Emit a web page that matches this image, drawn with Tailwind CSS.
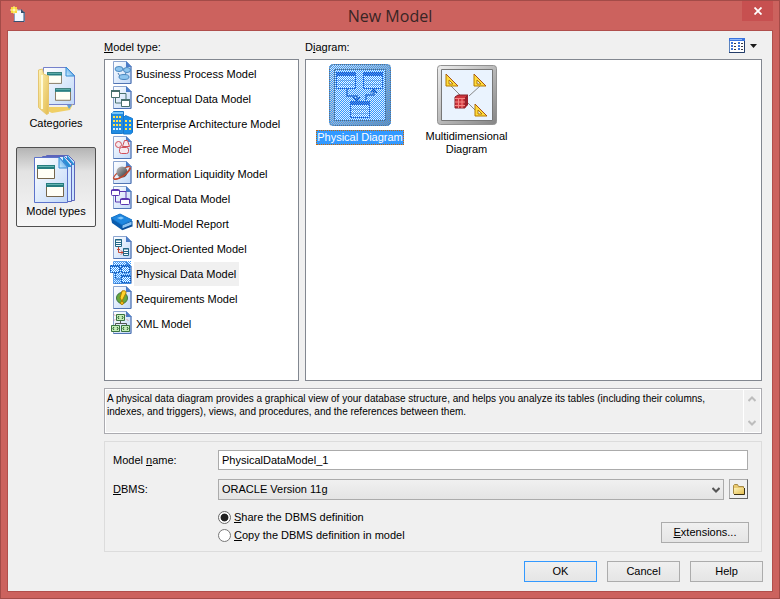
<!DOCTYPE html>
<html lang="en">
<head>
    <meta charset="UTF-8">
    <meta name="viewport" content="width=device-width, initial-scale=1.0">
    <title>New Model</title>
    <script src="https://cdn.jsdelivr.net/npm/@tailwindcss/browser@4"></script>
</head>
<body class="font-['Liberation_Sans',sans-serif] text-[11px] leading-[13px] text-black">

<!-- shared shapes -->
<svg class="absolute w-0 h-0" aria-hidden="true">
    <defs>
        <linearGradient id="paper" x1="0" y1="0" x2="1" y2="1">
            <stop offset="0" stop-color="#fff"/>
            <stop offset="1" stop-color="#c0d8f8"/>
        </linearGradient>
        <linearGradient id="folder" x1="0" y1="0" x2="1" y2="1">
            <stop offset="0" stop-color="#fdf3b8"/>
            <stop offset="1" stop-color="#e5bd50"/>
        </linearGradient>
        <linearGradient id="fold" x1="0" y1="1" x2="1" y2="0">
            <stop offset="0" stop-color="#d5f2ff"/>
            <stop offset="1" stop-color="#2687df"/>
        </linearGradient>
        <linearGradient id="steel" x1="0" y1="0" x2="1" y2="1">
            <stop offset="0" stop-color="#eee"/>
            <stop offset="1" stop-color="#858585"/>
        </linearGradient>
        <linearGradient id="rock" x1="0" y1="0" x2="1" y2="1">
            <stop offset="0" stop-color="#c4c4c4"/>
            <stop offset="1" stop-color="#303338"/>
        </linearGradient>
        <pattern id="dots" width="2" height="2" patternUnits="userSpaceOnUse">
            <path d="M0 0h1v1H0zM1 1h1v1H1z" fill="#3399ff" shape-rendering="crispEdges"/>
        </pattern>
        <symbol id="page" viewBox="0 0 24 24">
            <path d="M3.500 .5h13l4.500 4.500v17.500h-17.500z" fill="url(#paper)" stroke="#8ca5d0"/>
            <path d="M3.500 22.500h17.500V5" fill="none" stroke="#5074b4"/>
            <path d="M16 0l5.500 6h-5.500z" fill="#4a7cc8"/>
        </symbol>
        <symbol id="win" viewBox="0 0 18 14">
            <path d="M.5.5h17v13H.5z" fill="#fffff6" stroke="#75664c"/>
            <path d="M0 0h18v4H0z" fill="#267d80"/>
            <path d="M1 1h16v1H1z" fill="#65b5b1"/>
        </symbol>
        <symbol id="ruler" viewBox="0 0 14 14">
            <path d="M1 1l12 12H1z" fill="#ffdb3c" stroke="#b47a00"/>
            <path d="M4 7l4 4H4z" fill="#e8eef8" stroke="#b47a00"/>
            <path d="M1 1l12 12" stroke="#a8521a"/>
        </symbol>
    </defs>
</svg>

<div class="flex flex-col h-screen bg-[#cc625e] border border-[#a34b48]">
    <header class="relative h-[29px] shrink-0 flex items-center justify-center">
        <svg class="absolute left-[9px] top-[5px] w-4 h-4" viewBox="0 0 16 16">
            <path d="M4.500 4h7l3 3v8.500h-10z" fill="#f4f8ff" stroke="#8b9fc0"/>
            <path d="M3.500 15.500h10.500V6" fill="none" stroke="#365073"/>
            <path d="M11 3l4 4h-4z" fill="#35506c"/>
            <path d="M1 1h6v6H1z" fill="#f9d93a"/>
            <path d="M3 3h2v2H3zM4 0v2M4 6v2M0 4h2M6 4h2" fill="#fff" stroke="#fff4a0"/>
        </svg>
        <h1 class="font-['Open_Sans',sans-serif] text-base leading-4 text-[#382525]">New Model</h1>
        <button class="absolute right-[6px] top-0 w-[31px] h-5 bg-[#c75050] flex items-center justify-center" aria-label="Close">
            <svg class="w-2 h-2" viewBox="0 0 8 8"><path d="M.5.5l7 7M7.500.5l-7 7" stroke="#fff" stroke-width="1.800"/></svg>
        </button>
    </header>

    <main class="flex-1 min-h-0 mx-[6px] mb-[6px] border border-[#b04f4c] bg-[#f0f0f0] flex">
        <nav class="w-24 shrink-0 pl-2 pt-7">
            <button class="w-20 h-20 flex flex-col items-center pt-2">
                <svg class="w-12 h-12" viewBox="0 0 48 48">
                    <path d="M11.500.5h23l8 8v29h-31z" fill="url(#paper)" stroke="#7581cb"/>
                    <path d="M34 0l8.500 9H34z" fill="url(#fold)" stroke="#328bd5"/>
                    <path d="M7 40h28l6-3-3 6-18 3z" fill="#f0cf65"/>
                    <path d="M35 38h5l-3 4z" fill="#609fd4"/>
                    <use href="#win" x="15" y="5" width="15" height="12"/>
                    <use href="#win" x="23" y="21" width="16" height="13"/>
                    <path d="M6.500 3l4-1 1 5 5 2v37.500l-2 1-8-7z" fill="url(#folder)" stroke="#e5c671"/>
                    <path d="M10 8v34" stroke="#fffbd9" stroke-width="2"/>
                </svg>
                <span class="mt-[2px]">Categories</span>
            </button>
            <button class="w-20 h-20 mt-2 flex flex-col items-center pt-[7px] border border-[#505050] rounded-xs bg-linear-to-b from-[#b5b5b5] via-[#e3e3e3] via-30% to-[#f7f7f7]">
                <svg class="w-12 h-12" viewBox="0 0 48 48">
                    <path d="M14.500.5h22l6 6v39h-28z" fill="#cce4ff" stroke="#5c65bb"/>
                    <path d="M35 0l8 10h-8z" fill="#2791d7"/>
                    <path d="M10.500 1.500h22l7 7v38h-29z" fill="#d6eaff" stroke="#5c65bb"/>
                    <path d="M31 1l9 11h-9z" fill="#2791d7"/>
                    <path d="M2.500 2.500h25l8 9v36h-33z" fill="url(#paper)" stroke="#5c73cb"/>
                    <path d="M27 2l9 11h-9z" fill="url(#fold)" stroke="#328bd5"/>
                    <use href="#win" x="5" y="10" width="18" height="14"/>
                    <use href="#win" x="14" y="28" width="18" height="14"/>
                </svg>
                <span class="mt-[2px]">Model types</span>
            </button>
        </nav>

        <div class="flex-1 min-w-0 flex flex-col pr-[10px] pb-[9px]">
            <div class="h-7 shrink-0 flex items-center">
                <h2 class="w-[201px] pt-1"><u>M</u>odel type:</h2>
                <h2 class="flex-1 pt-1">D<u>i</u>agram:</h2>
                <button class="flex items-center gap-[5px] pr-[5px] pt-px" aria-label="View">
                    <svg class="w-4 h-[15px]" viewBox="0 0 16 15">
                        <path d="M.5.5h15v14H.5z" fill="#fff" stroke="#5c83bd"/>
                        <path d="M0 0h16v3H0z" fill="#3a74df"/>
                        <path d="M1 1h12v1H1z" fill="#91b9fa"/>
                        <path d="M15.500 3v11.500H0" fill="none" stroke="#233c68"/>
                        <path d="M2 5h2M2 8h2M2 11h2M9 5h2M9 8h2M9 11h2" stroke="#3e72d4" stroke-width="2"/>
                        <path d="M5 5.500h2M5 8.500h2M5 11.500h2M12 5.500h2M12 8.500h2M12 11.500h2" stroke="#3c3c48"/>
                    </svg>
                    <svg class="w-[7px] h-1" viewBox="0 0 7 4"><path d="M0 0h7L3.500 4z" fill="#1a1a1a"/></svg>
                </button>
            </div>

            <div class="flex-1 min-h-0 flex gap-[6px]">
                <ul class="w-[195px] shrink-0 border border-[#828790] bg-white pt-px pl-[5px]">
                    <li class="h-[25px] flex items-start">
                        <svg class="w-6 h-6" viewBox="0 0 24 24">
                            <use href="#page" width="24" height="24"/>
                            <path d="M9 8l8 0M17 9l-3 8M8 12l3 5" fill="none" stroke="#4b7cac"/>
                            <ellipse cx="9" cy="8" rx="4" ry="2.500" fill="#8dc5ef" stroke="#4a88c0"/>
                            <ellipse cx="17" cy="9" rx="3.500" ry="2.500" fill="#8dc5ef" stroke="#4a88c0"/>
                            <ellipse cx="14" cy="16" rx="5" ry="2.500" fill="#8dc5ef" stroke="#4a88c0"/>
                        </svg>
                        <span class="mt-px h-6 px-[2px] leading-6">Business Process Model</span>
                    </li>
                    <li class="h-[25px] flex items-start">
                        <svg class="w-6 h-6" viewBox="0 0 24 24">
                            <use href="#page" width="24" height="24"/>
                            <path d="M5.500 11v6H12M9 7.500h7V13" fill="none" stroke="#48706e"/>
                            <path d="M1.500 4.500h8v7h-8zM11.500 13.500h8v7h-8z" fill="#fff" stroke="#48706e"/>
                            <path d="M1 5h9M11 14h9" stroke="#48706e" stroke-width="2"/>
                        </svg>
                        <span class="mt-px h-6 px-[2px] leading-6">Conceptual Data Model</span>
                    </li>
                    <li class="h-[25px] flex items-start">
                        <svg class="w-6 h-6" viewBox="0 0 24 24">
                            <path d="M1.500 2.500l2-2h10v20l-1 2h-11z" fill="#218be0" stroke="#1878cc"/>
                            <path d="M13.500 6.500l2-2 7 3v14l-2 1.500h-7z" fill="#198be8" stroke="#1878cc"/>
                            <path d="M2 2h11" stroke="#78c6fa" stroke-width="2"/>
                            <path d="M3 6h8M3 10h8M3 14h8" stroke="#ffe04c" stroke-width="2" stroke-dasharray="2 1"/>
                            <path d="M3 18h8" stroke="#d7efff" stroke-width="2" stroke-dasharray="2 1"/>
                            <path d="M15 10h6M15 14h6M15 18h6" stroke="#ffe04c" stroke-width="2" stroke-dasharray="2 2"/>
                        </svg>
                        <span class="mt-px h-6 px-[2px] leading-6">Enterprise Architecture Model</span>
                    </li>
                    <li class="h-[25px] flex items-start">
                        <svg class="w-6 h-6" viewBox="0 0 24 24">
                            <use href="#page" width="24" height="24"/>
                            <g fill="#f5e9ef" stroke="#d0505a">
                                <path d="M14.500 4.500h3l2 6h-7z"/>
                                <circle cx="8.500" cy="8.500" r="3"/>
                                <rect x="9.500" y="11.500" width="9" height="6" rx="2"/>
                            </g>
                        </svg>
                        <span class="mt-px h-6 px-[2px] leading-6">Free Model</span>
                    </li>
                    <li class="h-[25px] flex items-start">
                        <svg class="w-6 h-6" viewBox="0 0 24 24">
                            <use href="#page" width="24" height="24"/>
                            <ellipse cx="12" cy="12" rx="10" ry="3" fill="none" stroke="#c3482e" transform="rotate(-35 12 12)"/>
                            <circle cx="12" cy="11" r="5.500" fill="url(#rock)"/>
                            <path d="M4 18c5 1 14-5 16-11" fill="none" stroke="#c3482e" stroke-width="1.500"/>
                        </svg>
                        <span class="mt-px h-6 px-[2px] leading-6">Information Liquidity Model</span>
                    </li>
                    <li class="h-[25px] flex items-start">
                        <svg class="w-6 h-6" viewBox="0 0 24 24">
                            <use href="#page" width="24" height="24"/>
                            <path d="M5.500 10v6H12M9 5.500h7V12" fill="none" stroke="#5b38b0"/>
                            <rect x="1.500" y="3.500" width="8" height="6" rx="1" fill="#fff" stroke="#5b38b0"/>
                            <rect x="10.500" y="12.500" width="9" height="6" rx="1" fill="#fff" stroke="#5b38b0"/>
                            <path d="M1 4.500h9M10 13.500h10" stroke="#5b38b0" stroke-width="1"/>
                        </svg>
                        <span class="mt-px h-6 px-[2px] leading-6">Logical Data Model</span>
                    </li>
                    <li class="h-[25px] flex items-start">
                        <svg class="w-6 h-6" viewBox="0 0 24 24">
                            <path d="M1 7l11 6v6L2 12z" fill="#0a5cae"/>
                            <path d="M12 14l10-4v4l-10 4z" fill="#8fc4f2" stroke="#0a5ba9"/>
                            <path d="M1 7l9-4 12 6-10 5z" fill="#1e87e0" stroke="#1272c8"/>
                            <path d="M7 7l4-1.500 3 1.500-3 1.500z" fill="#83c6f8"/>
                            <path d="M12 18.500l10.500-4" stroke="#084c97" stroke-width="1.500"/>
                        </svg>
                        <span class="mt-px h-6 px-[2px] leading-6">Multi-Model Report</span>
                    </li>
                    <li class="h-[25px] flex items-start">
                        <svg class="w-6 h-6" viewBox="0 0 24 24">
                            <use href="#page" width="24" height="24"/>
                            <path d="M5.500 3.500h6v7h-6zM13.500 12.500h5v7h-5z" fill="#f8fdff" stroke="#236685"/>
                            <path d="M5 4h7M6 6.500h5M6 8.500h5M13 13h6M14 15.500h4M14 17.500h4" stroke="#236685"/>
                            <path d="M8.500 11v5.500H13M7 13.500h3M11 14.500l2 2-2 2" fill="none" stroke="#c34734"/>
                        </svg>
                        <span class="mt-px h-6 px-[2px] leading-6">Object-Oriented Model</span>
                    </li>
                    <li class="h-[25px] flex items-start">
                        <svg class="w-6 h-6" viewBox="0 0 24 24">
                            <use href="#page" width="24" height="24"/>
                            <path d="M5.500 11v7H12M9 7.500h7V13" fill="none" stroke="#204f9f"/>
                            <path d="M.5 4.500h9v7h-9zM11.500 4.500h8v7h-8zM11.500 14.500h9v7h-9z" fill="#fff" stroke="#204f9f"/>
                            <path d="M0 5h10M11 5h9M11 15h10" stroke="#204f9f" stroke-width="2"/>
                            <path d="M0 4h3V0h18v23H3V12H0z" fill="url(#dots)"/>
                        </svg>
                        <span class="mt-px h-6 pl-[2px] pr-[3px] leading-6 bg-[#f0f0f0]">Physical Data Model</span>
                    </li>
                    <li class="h-[25px] flex items-start">
                        <svg class="w-6 h-6" viewBox="0 0 24 24">
                            <use href="#page" width="24" height="24"/>
                            <circle cx="12" cy="12" r="5.500" fill="#69a93d" stroke="#3e7445"/>
                            <path d="M12 5c4-1 5 1 3 4l-3 6-2-3z" fill="#ffd42a" stroke="#ac7900"/>
                            <circle cx="12" cy="17" r="1.500" fill="#ffd42a" stroke="#ac7900"/>
                        </svg>
                        <span class="mt-px h-6 px-[2px] leading-6">Requirements Model</span>
                    </li>
                    <li class="h-[25px] flex items-start">
                        <svg class="w-6 h-6" viewBox="0 0 24 24">
                            <use href="#page" width="24" height="24"/>
                            <path d="M5.500 15v-2.500h11V15M10.500 10v3" fill="none" stroke="#555"/>
                            <path d="M6.500 3.500h8v6h-8zM1.500 14.500h8v6h-8zM11.500 14.500h8v6h-8z" fill="#c5edb8" stroke="#39733f"/>
                            <path d="M9 5L8 6.500 9 8M12 5l1 1.500L12 8M4 16l-1 1.500L4 19M7 16l1 1.500L7 19M14 16l-1 1.500 1 1.500M17 16l1 1.500-1 1.500" fill="none" stroke="#22552a"/>
                            <path d="M4 3.500l1 1M5 8.500l-1 1M17 3.500l-1 1M17 8.500l1 1" stroke="#cc5555"/>
                        </svg>
                        <span class="mt-px h-6 px-[2px] leading-6">XML Model</span>
                    </li>
                </ul>

                <div class="flex-1 border border-[#828790] bg-white flex items-start pt-1 pl-px">
                    <button class="w-[106px] flex flex-col items-center">
                        <svg class="w-[62px] h-[62px]" viewBox="0 0 62 62">
                            <rect x=".5" y=".5" width="61" height="61" rx="4" fill="url(#steel)" stroke="#707070"/>
                            <path d="M5.500 5.500h51v51h-51z" fill="#e5effc" stroke="#666"/>
                            <path d="M18 25v7h10v4M37 36v-5h8v-5M24 33l4 4 3-4M42 29l3-4 3 4" fill="none" stroke="#2146a6" stroke-width="1.500"/>
                            <g fill="#f8fbff" stroke="#2953c3">
                                <path d="M7.500 8.500h19v16h-19zM34.500 8.500h19v16h-19zM21.500 37.500h19v16h-19z"/>
                                <path d="M7 10h20M34 10h20M21 39h20" stroke-width="4"/>
                                <path d="M8 16.500h18M8 20.500h18M35 16.500h18M35 20.500h18M22 45.500h18M22 49.500h18" stroke="#a8bddf"/>
                            </g>
                            <rect width="62" height="62" rx="4" fill="url(#dots)"/>
                        </svg>
                        <span class="mt-1 h-[15px] leading-[13px] bg-[#3399ff] text-white border border-dotted border-[#cc6600]">Physical Diagram</span>
                    </button>
                    <button class="w-[107px] flex flex-col items-center">
                        <svg class="w-[62px] h-[62px]" viewBox="0 0 62 62">
                            <rect x="1.500" y="1.500" width="59" height="59" rx="3" fill="url(#steel)" stroke="#929292"/>
                            <path d="M5.500 5.500h51v51h-51z" fill="#eaf3fe" stroke="#777"/>
                            <path d="M15 22l9 9M44 22L33 32M31 38l9 9" stroke="#888"/>
                            <use href="#ruler" x="9" y="9" width="14" height="14"/>
                            <use href="#ruler" x="37" y="9" width="14" height="14"/>
                            <use href="#ruler" x="38" y="39" width="14" height="14"/>
                            <path d="M19 33l3-2h10l-3 3v10H19z" fill="#ce343d" stroke="#862029"/>
                            <path d="M29 34l3-3v10l-3 3z" fill="#981f2b"/>
                            <path d="M19 34.500h10M19 38h10M19 41.500h10M22.500 34v10M26 34v10" stroke="#f58884"/>
                        </svg>
                        <span class="mt-1">Multidimensional<br>Diagram</span>
                    </button>
                </div>
            </div>

            <div class="mt-[7px] h-[46px] shrink-0 border border-[#ababb0] flex">
                <p class="flex-1 border border-white pl-px pt-[2px] text-[10px]">A physical data diagram provides a graphical view of your database structure, and helps you analyze its tables (including their columns,<br>indexes, and triggers), views, and procedures, and the references between them.</p>
                <div class="w-[17px] border border-l-0 border-white flex flex-col items-center justify-between py-[6px]">
                    <svg class="w-2 h-[6px]" viewBox="0 0 8 6"><path d="M.5 5L4 1.500 7.500 5" fill="none" stroke="#bdbdbd" stroke-width="2"/></svg>
                    <svg class="w-2 h-[6px]" viewBox="0 0 8 6"><path d="M.5 1L4 4.500 7.500 1" fill="none" stroke="#bdbdbd" stroke-width="2"/></svg>
                </div>
            </div>

            <form class="mt-[7px] h-[111px] shrink-0 border border-[#dcdcdc] pl-2 pr-[13px] pt-2">
                <div class="flex items-center h-5">
                    <label for="name" class="w-[105px]">Model <u>n</u>ame:</label>
                    <input id="name" type="text" value="PhysicalDataModel_1" class="flex-1 h-5 px-[3px] bg-white border border-[#ababab]">
                </div>
                <div class="flex items-center h-5 mt-[9px]">
                    <label for="dbms" class="w-[105px]"><u>D</u>BMS:</label>
                    <div class="relative flex-1">
                        <select id="dbms" class="block appearance-none w-full h-[21px] px-[3px] border border-[#ababab] bg-linear-to-b from-[#f0f0f0] to-[#e4e4e4]">
                            <option>ORACLE Version 11g</option>
                        </select>
                        <svg class="absolute right-1 top-2 w-2 h-[6px] pointer-events-none" viewBox="0 0 8 6"><path d="M.5 1L4 4.500 7.500 1" fill="none" stroke="#555" stroke-width="2"/></svg>
                    </div>
                    <button type="button" class="ml-[5px] w-[19px] h-5 border border-[#aaa] border-r-[#666] border-b-[#666] flex items-center justify-center" aria-label="Browse">
                        <svg class="w-3 h-[11px]" viewBox="0 0 12 11">
                            <path d="M.5 9.500v-8l1-1h3l1 2h5v7z" fill="#e9c970" stroke="#a68a45"/>
                            <path d="M1 4h10v6H1z" fill="url(#folder)"/>
                            <path d="M1 10.500h10.500V4" fill="none" stroke="#3b3014"/>
                        </svg>
                    </button>
                </div>
                <div class="flex justify-between mt-[10px]">
                    <div class="pl-[105px] flex flex-col gap-px">
                        <label class="flex items-center h-[17px] gap-[3px]">
                            <input type="radio" name="definition" checked class="appearance-none w-[13px] h-[13px] rounded-full border border-[#666] bg-white bg-radial from-[#222] from-45% to-white to-55%">
                            <span><u>S</u>hare the DBMS definition</span>
                        </label>
                        <label class="flex items-center h-[17px] gap-[3px]">
                            <input type="radio" name="definition" class="appearance-none w-[13px] h-[13px] rounded-full border border-[#777] bg-white">
                            <span><u>C</u>opy the DBMS definition in model</span>
                        </label>
                    </div>
                    <button type="button" class="w-[88px] h-[21px] mt-[13px] -mr-px border border-[#acacac] bg-linear-to-b from-[#f0f0f0] to-[#e5e5e5]"><u>E</u>xtensions...</button>
                </div>
            </form>

            <div class="mt-[9px] -mr-px flex justify-end gap-[10px]">
                <button class="w-[73px] h-[21px] border border-[#3399ff] bg-linear-to-b from-[#f0f0f0] to-[#e5e5e5]">OK</button>
                <button class="w-[73px] h-[21px] border border-[#acacac] bg-linear-to-b from-[#f0f0f0] to-[#e5e5e5]">Cancel</button>
                <button class="w-[73px] h-[21px] border border-[#acacac] bg-linear-to-b from-[#f0f0f0] to-[#e5e5e5]">Help</button>
            </div>
        </div>
    </main>
</div>
</body>
</html>
